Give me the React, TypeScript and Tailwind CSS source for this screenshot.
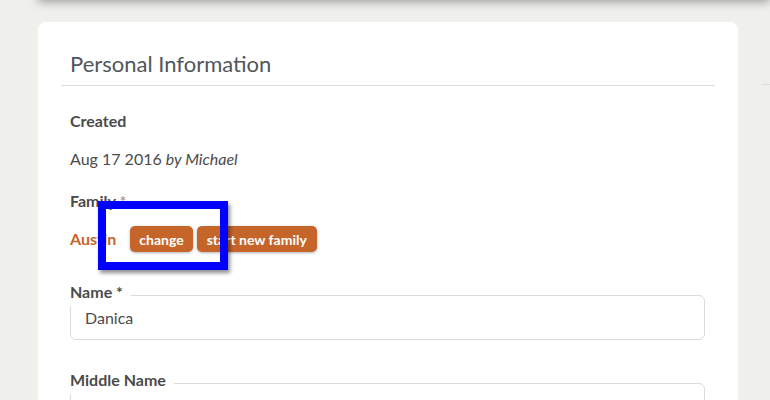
import React from 'react';

function Field({ label, value }: { label: string; value?: string }) {
  return (
    <fieldset className="rounded-md border border-[#dcdcdc] px-[14px] pb-[9px]">
      <legend className="-ml-[15px] pr-[8px] pb-[6px] text-[16px] font-bold leading-[16px] text-[#4b4b4b]">
        {label}
      </legend>
      <div className="h-[24px] text-[16px] leading-[24px] text-[#4b4b4b]">{value}</div>
    </fieldset>
  );
}

export default function App() {
  return (
    <div
      className="relative h-[400px] w-[770px] overflow-hidden bg-[#efefeb] text-[#4b4b4b]"
      style={{ fontFamily: 'Lato, "Open Sans", sans-serif' }}
    >
      {/* card above, only its shadow shows */}
      <div className="-mt-[30px] ml-[38px] h-[30px] bg-[#efefeb] shadow-[0_2px_10px_rgba(0,0,0,0.35)]" />

      <div className="mt-[22px] flex gap-[24px] pl-[38px]">
        {/* Personal Information card */}
        <div className="w-[700px] shrink-0 rounded-lg bg-white px-[23px] pt-[27px] pb-[40px]">
          <h2 className="border-b border-[#dddddd] px-[9px] pb-[6px] text-[22px] leading-[30px] text-[#50565b]">
            Personal Information
          </h2>

          <div className="flex flex-col pl-[9px] pr-[10px] pt-[23px]">
            <div className="text-[16px] font-bold leading-[24px]">Created</div>
            <div className="mt-[14px] text-[16px] leading-[24px]">
              Aug 17 2016 <i>by Michael</i>
            </div>

            <div className="mt-[18px] text-[16px] font-bold leading-[24px]">
              Family <span className="font-normal text-[#888]">*</span>
            </div>
            <div className="mt-[13px] flex items-center">
              <span className="mr-[14px] text-[16px] font-bold text-[#c6652a]">Austin</span>
              <button className="mr-[4px] h-[26px] rounded-[5px] bg-[#c6652a] px-[9px] text-[14px] font-bold text-white shadow-[0_1px_3px_rgba(0,0,0,0.3)]">
                change
              </button>
              <button className="h-[26px] rounded-[5px] bg-[#c6652a] px-[10px] text-[14px] font-bold text-white shadow-[0_1px_3px_rgba(0,0,0,0.3)]">
                start new family
              </button>
            </div>

            <div className="mt-[32px]">
              <Field label="Name *" value="Danica" />
            </div>
            <div className="mt-[32px]">
              <Field label="Middle Name" />
            </div>
          </div>
        </div>

        {/* next column */}
        <div className="w-[40px] shrink-0 pt-[62px]">
          <div className="border-b border-[#dddddd]" />
        </div>
      </div>

      {/* highlight annotation */}
      <div className="absolute left-[98px] top-[201px] h-[69px] w-[130px] border-[8px] border-[#0000ff] shadow-[2px_3px_4px_rgba(0,0,0,0.45)]" />
    </div>
  );
}
